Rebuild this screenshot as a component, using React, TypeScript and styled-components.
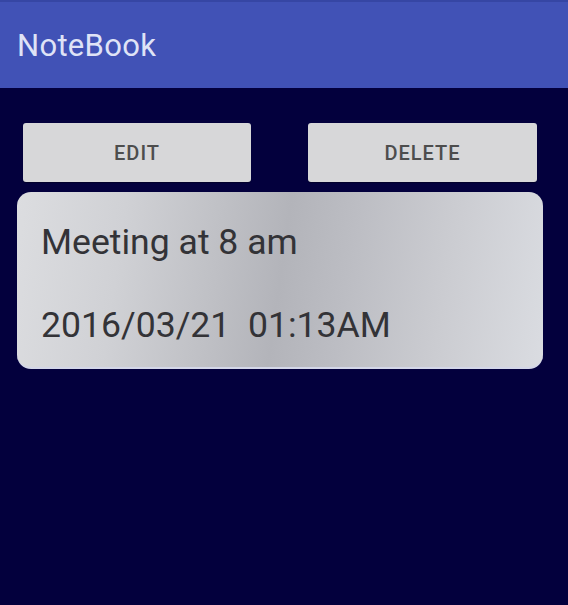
import React from "react";
import styled, { createGlobalStyle } from "styled-components";

const Global = createGlobalStyle`
  html, body { margin: 0; padding: 0; background: #03003d; }
  body { font-family: Roboto, "Noto Sans", "Liberation Sans", sans-serif; }
  #root { min-height: 605px; background: #03003d; }
`;

const Screen = styled.div`
  width: 568px;
  height: 605px;
  background: #03003d;
  display: flex;
  flex-direction: column;
  overflow: hidden;
`;

const AppBar = styled.header`
  height: 88px;
  box-sizing: border-box;
  background: #4152b6;
  border-top: 2px solid #3646a4;
  display: flex;
  align-items: center;
  padding: 0 0 0 17px;
`;

const Title = styled.h1`
  margin: 0;
  font-family: Roboto, "Noto Sans", sans-serif;
  font-weight: 400;
  font-size: 31px;
  color: #dfe3f6;
  letter-spacing: 0.3px;
`;

const Content = styled.main`
  padding: 35px 25px 0 17px;
  display: flex;
  flex-direction: column;
  gap: 10px;
`;

const ButtonRow = styled.div`
  display: grid;
  grid-template-columns: 228px 229px;
  justify-content: space-between;
  padding: 0 6px 0 6px;
`;

const ActionButton = styled.button`
  height: 59px;
  border: none;
  border-radius: 3px;
  background: #d7d7d9;
  color: #4d4d4d;
  font-family: Roboto, "Noto Sans", sans-serif;
  font-weight: 500;
  font-size: 20px;
  letter-spacing: 1px;
  text-transform: uppercase;
  padding: 0;
  box-shadow: 0 1px 1px rgba(0, 0, 0, 0.3);
`;

const NoteCard = styled.section`
  height: 177px;
  box-sizing: border-box;
  border-radius: 14px;
  background: linear-gradient(
    98deg,
    #dcdde0 0%,
    #d0d1d5 20%,
    #bfc0c5 38%,
    #b3b4ba 50%,
    #bcbdc3 62%,
    #cbccd1 80%,
    #dadce1 100%
  );
  border-bottom: 2px solid #d3d6e8;
  padding: 26px 24px 0 24px;
  display: flex;
  flex-direction: column;
  gap: 35px;
`;

const NoteText = styled.div`
  font-family: Roboto, "Noto Sans", sans-serif;
  font-size: 35.6px;
  line-height: 48px;
  color: #333337;
`;

export default function App() {
  return (
    <>
      <Global />
      <Screen>
        <AppBar>
          <Title>NoteBook</Title>
        </AppBar>
        <Content>
          <ButtonRow>
            <ActionButton>Edit</ActionButton>
            <ActionButton>Delete</ActionButton>
          </ButtonRow>
          <NoteCard>
            <NoteText>Meeting at 8 am</NoteText>
            <NoteText>2016/03/21&nbsp;&nbsp;01:13AM</NoteText>
          </NoteCard>
        </Content>
      </Screen>
    </>
  );
}
